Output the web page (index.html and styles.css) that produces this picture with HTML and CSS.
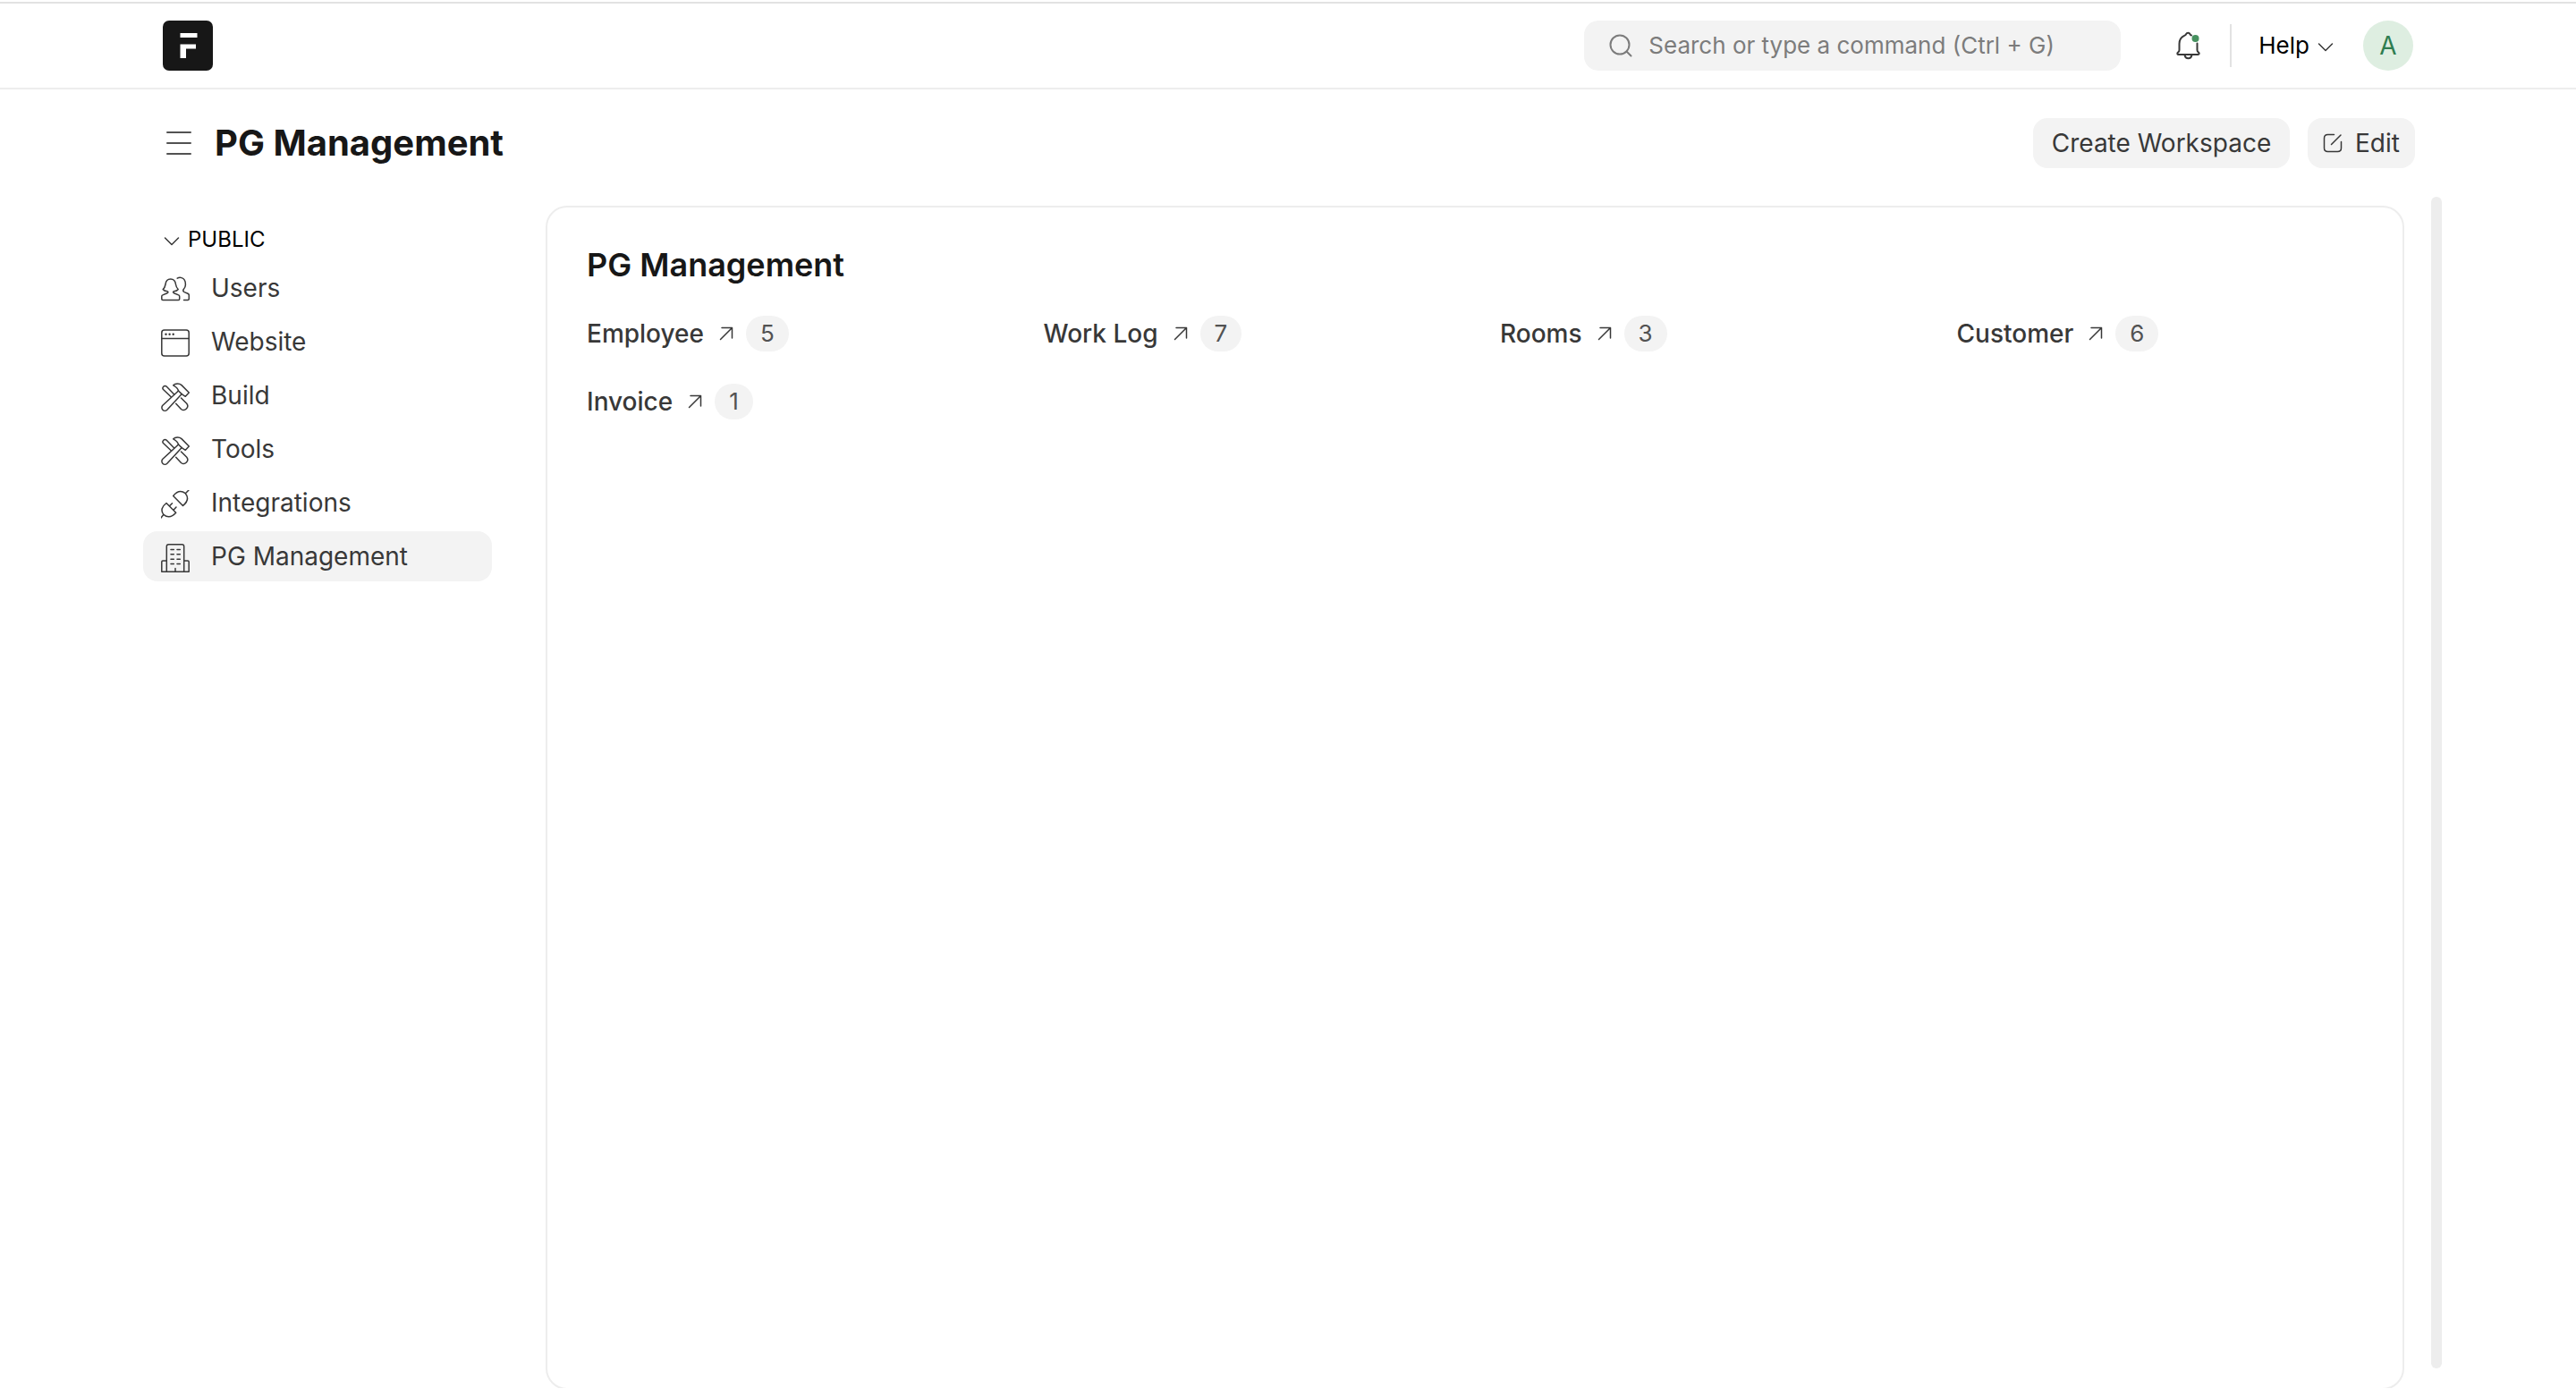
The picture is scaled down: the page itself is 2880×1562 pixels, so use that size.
FILE: index.html
```html
<!DOCTYPE html>
<html lang="en">
<head>
<meta charset="utf-8">
<meta name="viewport" content="width=device-width, initial-scale=1">
<title>PG Management</title>
<link rel="stylesheet" href="styles.css">
</head>
<body>
<svg class="sprite" aria-hidden="true">
  <symbol id="i-chevron" viewBox="0 0 20 12"><path d="M2.500 2.000L10 9.500L17.500 2.000"/></symbol>
  <symbol id="i-arrow" viewBox="0 0 16 16"><path d="M1.500 14.500L14.500 1.500M3 1.500H14.500V13"/></symbol>
  <symbol id="i-users" viewBox="0 0 32 32"><path d="M2 27.500H19.500Q20.700 27.500 20.700 26.300V23.500Q20.700 22.300 19.600 21.900L14.500 19.700Q12.600 18.500 14.500 17.800Q18 17.500 19.200 15.500Q17 13.500 16.500 10Q15.800 4 10.700 4Q5.600 4 5 10Q4.400 13.500 2.200 15.500Q3.500 17.500 7 17.800Q8.900 18.500 7 19.700L1.900 21.900Q.8 22.300 .8 23.500V26.300Q.8 27.500 2 27.500Z"/><path d="M18.200 3.200Q20.500 1.900 23 2.600C26.500 3.500 27.500 7 27.400 10.500Q27.300 13.300 25.400 15.300Q23.800 17.500 26.200 18.600L30 20.200Q31.300 20.800 31.300 22V26.300Q31.300 27.500 30 27.500H25.500"/></symbol>
  <symbol id="i-website" viewBox="0 0 32 32"><rect x=".8" y="1" width="30.400" height="29" rx="3"/><path d="M.8 10.500H31.200"/><g class="dot"><circle cx="5.500" cy="5.800" r="1.200"/><circle cx="9.600" cy="5.800" r="1.200"/><circle cx="13.700" cy="5.800" r="1.200"/></g></symbol>
  <symbol id="i-tools" viewBox="0 0 32 32"><path d="M19.500 9L1.900 25.300A3.400 3.400 0 0 0 6.800 30.200L23.200 12.600"/><path d="M13.700 2.800C16 .6 20.500 .4 23 2.600L31.300 11L27.300 15.300L23.200 12.600L19.500 9Q18.600 5.300 13.700 2.800Z"/><path d="M14.500 12.800L6.300 4.200A2.300 2.300 0 0 0 2.800 7.800L11.200 15.800M22.500 17L28.800 23.200A4.500 4.500 0 0 1 22.500 29.500L16.700 23.300"/></symbol>
  <symbol id="i-plug" viewBox="0 0 32 32"><path d="M13.700 6.500L24.500 17.500C31 12 30.500 7.500 27.300 3.700C23 .4 18 1 13.700 6.500ZM27.300 3.700L31 0M6 14.500L16.700 25.200C12 30.500 7 30.700 2.900 27.300C-.5 23 .7 18.500 6 14.500ZM2.900 27.300L0 31M9.500 17.800L12.500 14.700M14 22.300L17 19"/></symbol>
  <symbol id="i-building" viewBox="0 0 32 32"><path d="M6.300 31V3Q6.300 .8 8.500 .8H23.500Q25.700 .8 25.700 3V31M6.300 19H2Q.8 19 .8 20.200V31.200H31.200V20.200Q31.200 19 30 19H25.700M16 27.500V31M11 6.500H14.300M18 6.500H21.300M11 11.800H14.300M18 11.800H21.300M11 17.200H14.300M18 17.200H21.300M11 22.500H14.300M18 22.500H21.300"/></symbol>
</svg>

<header class="navbar">
  <a class="logo" href="#" aria-label="Home">
    <svg viewBox="0 0 56 56" width="56" height="56"><rect width="56" height="56" rx="7" fill="#171717"/><path d="M19.500 14H38.500V19H19.500ZM19.500 26.500H37V31.500H26V42H19.500Z" fill="#fff"/></svg>
  </a>
  <div class="nav-tools">
    <label class="search">
      <svg class="icon" viewBox="0 0 26 26" width="26" height="26"><circle cx="12" cy="12" r="10.500"/><path d="M19.500 19.500L24.500 24.500"/></svg>
      <input type="text" aria-label="Search" placeholder="Search or type a command (Ctrl + G)">
    </label>
    <button class="plain bell" aria-label="Notifications">
      <svg class="icon" viewBox="0 0 28 32" width="28" height="32"><path d="M17 4.500Q15.800 4.200 15.500 3.200Q14.800 1.800 13.300 1.800Q11.800 1.800 11 3.200Q10.700 4.200 9.500 4.700Q3.500 7.500 3.500 14V21Q3.500 22.500 2.300 23.300Q1 24.300 1.500 25.500Q1.700 26 2.500 26H24.500Q25.300 26 25.500 25.500Q26 24.300 24.700 23.300Q23.500 22.500 23.500 21V13.500M9.500 26.500Q10.300 30.300 13.500 30.300Q16.700 30.300 17.500 26.500"/><circle cx="21.500" cy="8" r="4" fill="#46915f" stroke="none"/></svg>
    </button>
    <span class="divider"></span>
    <button class="plain help">Help <svg class="icon" width="20" height="12"><use href="#i-chevron"/></svg></button>
    <button class="avatar" aria-label="Account">A</button>
  </div>
</header>

<div class="page-head">
  <button class="plain menu" aria-label="Toggle sidebar">
    <svg class="icon" viewBox="0 0 28 28" width="28" height="28"><path d="M1 2H27M1 14H27M1 26H27"/></svg>
  </button>
  <h1>PG Management</h1>
  <div class="actions">
    <button class="btn btn-wide">Create Workspace</button>
    <button class="btn"><svg class="icon" viewBox="0 0 22 22" width="22" height="22"><path d="M12.500 1.500H5.500Q1.500 1.500 1.500 5.500V16.500Q1.500 20.500 5.500 20.500H16.500Q20.500 20.500 20.500 16.500V9.500M9.500 12.500L20 2"/></svg>Edit</button>
  </div>
</div>

<div class="content">
  <nav class="sidebar" aria-label="Workspaces">
    <button class="plain group"><svg class="icon" width="20" height="12"><use href="#i-chevron"/></svg>PUBLIC</button>
    <a class="item" href="#"><svg class="icon" width="32" height="32"><use href="#i-users"/></svg>Users</a>
    <a class="item" href="#"><svg class="icon" width="32" height="32"><use href="#i-website"/></svg>Website</a>
    <a class="item" href="#"><svg class="icon" width="32" height="32"><use href="#i-tools"/></svg>Build</a>
    <a class="item" href="#"><svg class="icon" width="32" height="32"><use href="#i-tools"/></svg>Tools</a>
    <a class="item" href="#"><svg class="icon" width="32" height="32"><use href="#i-plug"/></svg>Integrations</a>
    <a class="item active" href="#" aria-current="page"><svg class="icon" width="32" height="32"><use href="#i-building"/></svg>PG Management</a>
  </nav>
  <main class="card">
    <h2>PG Management</h2>
    <div class="shortcuts">
      <a class="shortcut" href="#">Employee<svg class="icon" width="16" height="16"><use href="#i-arrow"/></svg><span class="count">5</span></a>
      <a class="shortcut" href="#">Work Log<svg class="icon" width="16" height="16"><use href="#i-arrow"/></svg><span class="count">7</span></a>
      <a class="shortcut" href="#">Rooms<svg class="icon" width="16" height="16"><use href="#i-arrow"/></svg><span class="count">3</span></a>
      <a class="shortcut" href="#">Customer<svg class="icon" width="16" height="16"><use href="#i-arrow"/></svg><span class="count">6</span></a>
      <a class="shortcut" href="#">Invoice<svg class="icon" width="16" height="16"><use href="#i-arrow"/></svg><span class="count">1</span></a>
    </div>
  </main>
  <div class="scrollbar"></div>
</div>
</body>
</html>
```
FILE: styles.css
```css
* { box-sizing: border-box; }

body {
  margin: 0;
  height: 100vh;
  padding: 2px 0 10px;
  display: flex;
  flex-direction: column;
  background: #fff;
  color: #383838;
  font: 28px/32px Inter, "Liberation Sans", sans-serif;
}

a { color: inherit; text-decoration: none; }
button, input { font: inherit; color: inherit; }
button { border: 0; cursor: pointer; }
h1, h2 { margin: 0; color: #171717; }

.sprite { display: none; }
.icon {
  flex: none;
  fill: none;
  stroke: currentColor;
  stroke-width: 1.5;
  stroke-linecap: round;
  stroke-linejoin: round;
}
.dot { fill: currentColor; stroke: none; }
.plain { padding: 0; background: none; }

.navbar {
  display: flex;
  align-items: center;
  justify-content: space-between;
  padding: 19px 182px;
  border-top: 2px solid #e2e2e2;
  border-bottom: 2px solid #ededed;
}
.logo, .logo svg { display: block; }
.nav-tools { display: flex; align-items: center; }

.search {
  display: flex;
  align-items: center;
  gap: 18px;
  width: 600px;
  height: 56px;
  padding: 0 28px;
  border-radius: 16px;
  background: #f3f3f3;
  color: #7c7c7c;
}
.search .icon { stroke-width: 2; }
.search input {
  flex: 1;
  min-width: 0;
  padding: 0;
  border: 0;
  outline: 0;
  background: none;
  font-size: 26px;
}
.search input::placeholder { color: #7c7c7c; opacity: 1; }

.bell { margin-left: 62px; height: 32px; }
.bell .icon { display: block; stroke-width: 2; }
.divider { width: 2px; height: 48px; margin: 0 30px 0 32px; background: #e2e2e2; }
.help { display: flex; align-items: center; gap: 8px; color: #000; font-size: 26px; }
.help .icon { margin-top: 4px; color: #383838; }
.avatar {
  width: 56px;
  height: 56px;
  margin-left: 32px;
  padding: 0;
  border-radius: 50%;
  background: #deeee1;
  color: #2f7d50;
}

.page-head {
  display: flex;
  align-items: center;
  padding: 32px 180px 32px 186px;
}
.menu { height: 28px; margin-right: 26px; color: #525252; }
.menu .icon { display: block; stroke-width: 2; }
h1 { font-size: 40px; line-height: 48px; font-weight: 700; }
.actions { display: flex; gap: 20px; margin-left: auto; }
.btn {
  display: flex;
  align-items: center;
  justify-content: center;
  gap: 14px;
  min-width: 120px;
  height: 56px;
  padding: 0 16px;
  border-radius: 16px;
  background: #f3f3f3;
}
.btn-wide { min-width: 287px; }

.content {
  flex: 1;
  min-height: 0;
  display: flex;
  padding: 0 150px 0 160px;
  overflow: hidden;
}

.sidebar {
  flex: none;
  width: 390px;
  padding-top: 32px;
  display: flex;
  flex-direction: column;
  gap: 4px;
}
.group {
  display: flex;
  align-items: center;
  gap: 8px;
  height: 32px;
  margin-bottom: 6px;
  padding-left: 22px;
  color: #000;
  font-size: 24px;
}
.group .icon { margin-top: 4px; color: #383838; }
.item {
  display: flex;
  align-items: center;
  gap: 24px;
  height: 56px;
  padding: 0 20px;
  border-radius: 16px;
}
.item .icon { margin-top: 4px; }
.active { background: #f3f3f3; }

.card {
  flex: 1;
  margin: 10px 30px -2px 60px;
  padding: 40px 44px;
  border: 2px solid #ededed;
  border-radius: 24px;
}
h2 { font-size: 36px; line-height: 48px; font-weight: 600; }
.shortcuts {
  display: grid;
  grid-template-columns: repeat(4, 1fr);
  gap: 36px 56px;
  margin-top: 33px;
}
.shortcut { display: flex; align-items: center; height: 40px; font-weight: 500; }
.shortcut .icon { margin: 0 14px 0 17px; }
.count {
  padding: 4px 16px;
  border-radius: 20px;
  background: #f3f3f3;
  color: #525252;
  font-size: 26px;
  font-weight: 400;
}

.scrollbar {
  flex: none;
  width: 12px;
  margin-bottom: 22px;
  border-radius: 6px;
  background: #ededed;
}
```
